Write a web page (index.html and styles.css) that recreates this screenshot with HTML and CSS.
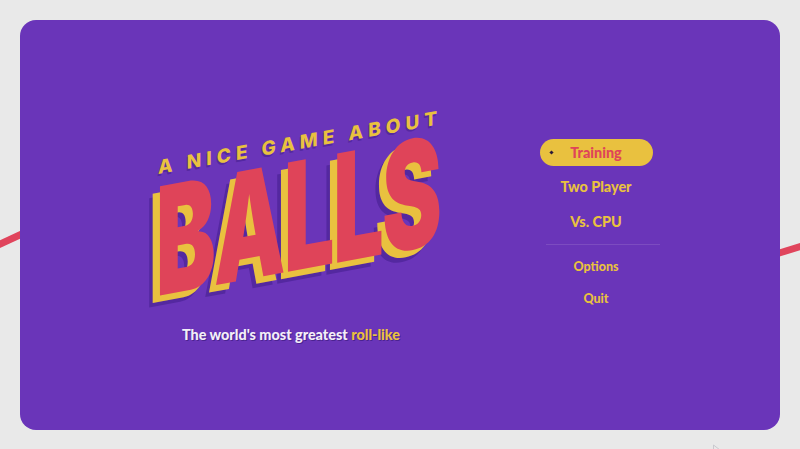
FILE: index.html
```html
<!DOCTYPE html>
<html>
<head>
    <title>A Nice Game About Balls</title>
    <link rel="stylesheet" href="styles.css">
</head>
<body>
    <svg class="backdrop" width="800" height="449" viewBox="0 0 800 449">
        <path d="M-2 245 L24 233" stroke="#e0445c" stroke-width="7" fill="none"></path>
        <path d="M776 254 L802 246" stroke="#e0445c" stroke-width="7" fill="none"></path>
        <path d="M713.5 445 L713.5 452 M713.5 445 L720 450" stroke="#c9c9cf" stroke-width="1" fill="none"></path>
    </svg>

    <div class="container">
        <div class="title-section">
            <div class="logo">
                <div class="tagline">A NICE GAME ABOUT</div>
                <div class="balls">BALLS</div>
            </div>
            <p class="subtitle">The world's most greatest <span class="accent">roll-like</span></p>
        </div>

        <div class="menu">
            <div class="item item-main selected"><span class="marker"></span>Training</div>
            <div class="item item-main">Two Player</div>
            <div class="item item-main">Vs. CPU</div>
            <div class="divider"></div>
            <div class="item item-small">Options</div>
            <div class="item item-small">Quit</div>
        </div>
    </div>
</body>
</html>
```

FILE: styles.css
```css
html, body {
    height: 100%;
}

body {
    margin: 0;
    padding: 20px 20px 19px;
    box-sizing: border-box;
    background-color: #e9e9e9;
    font-family: 'Lato', sans-serif;
    overflow: hidden;
    position: relative;
}

.backdrop {
    position: absolute;
    top: 0;
    left: 0;
}

.container {
    position: relative;
    height: 100%;
    background-color: #6a35b9;
    border-radius: 16px;
    display: flex;
}

.title-section {
    width: 516px;
    padding-left: 26px;
    box-sizing: border-box;
    flex-shrink: 0;
    display: flex;
    flex-direction: column;
    align-items: center;
}

.logo {
    height: 305px;
    width: 400px;
    display: flex;
    flex-direction: column;
    align-items: center;
}

.tagline {
    margin-top: 111px;
    margin-left: 19px;
    color: #e9c13f;
    font-family: 'Inter', sans-serif;
    font-weight: 800;
    font-size: 19px;
    letter-spacing: 5px;
    white-space: nowrap;
    text-shadow: -1px 2px 0 #5428a0;
    transform: skewY(-10deg);
}

.balls {
    margin-top: -13px;
    margin-left: 13px;
    color: #df4459;
    font-family: 'Inter', sans-serif;
    font-weight: 900;
    font-size: 150px;
    line-height: 150px;
    letter-spacing: -3px;
    white-space: nowrap;
    text-shadow:
        -12px 6px 0 #e9c13f,
        -18px 10px 0 #5428a0;
    transform: skewY(-10.5deg) scaleX(0.6);
}

.subtitle {
    margin: 0;
    color: #f3eef8;
    font-weight: 900;
    font-size: 14.4px;
    line-height: 20px;
    text-shadow: 1px 1px 0 #4a2390;
}

.accent {
    color: #e9c13f;
}

.menu {
    width: 120px;
    margin-top: 119px;
    display: flex;
    flex-direction: column;
    align-items: center;
    color: #e9c13f;
    font-weight: 900;
}

.item {
    width: 113px;
    text-align: center;
    box-sizing: border-box;
    position: relative;
}

.item-main {
    height: 27px;
    line-height: 26px;
    margin-bottom: 8px;
    font-size: 14.4px;
}

.item-small {
    height: 20px;
    line-height: 20px;
    margin-bottom: 12px;
    font-size: 12.5px;
}

.selected {
    background-color: #e9c13f;
    color: #df4459;
    border-radius: 14px;
    line-height: 27px;
}

.marker {
    position: absolute;
    left: 10px;
    top: 12px;
    width: 3px;
    height: 3px;
    background-color: #2a1a3a;
    transform: rotate(45deg);
}

.divider {
    width: 114px;
    height: 1px;
    margin: 0 0 12px 14px;
    background-color: #7c4cc0;
}
```
